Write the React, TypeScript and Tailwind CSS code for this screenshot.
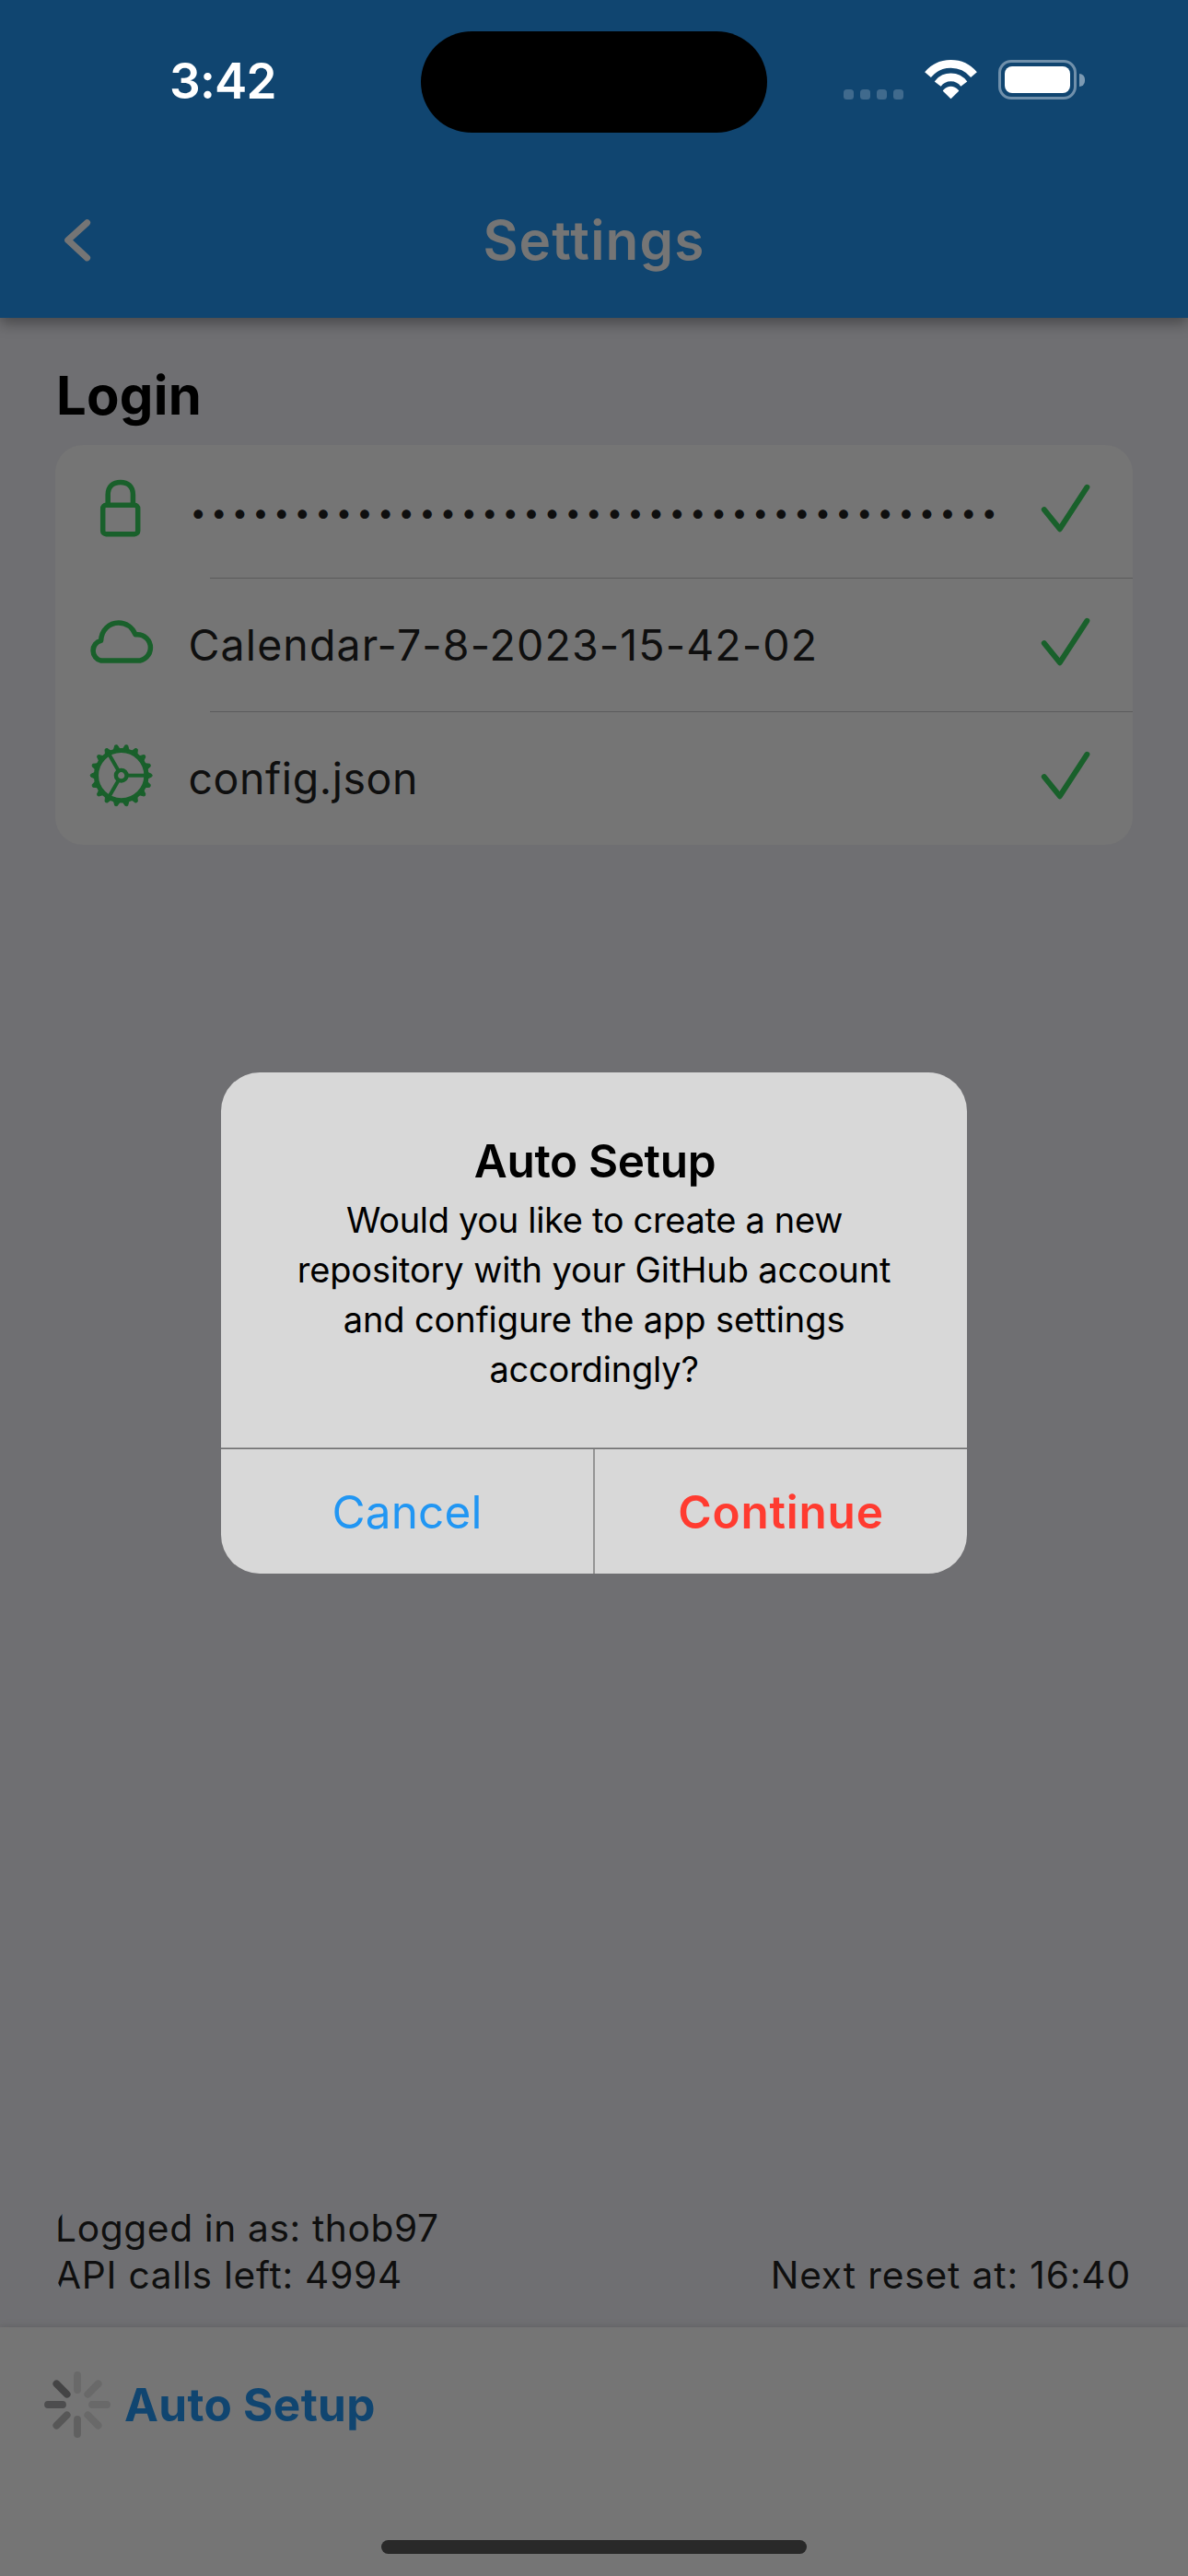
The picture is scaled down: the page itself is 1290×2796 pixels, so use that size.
import type { ReactNode } from "react";

const GREEN = "#19602b";

function StatusIcons() {
  return (
    <div className="flex items-center pb-1">
      <div className="mt-[31px] flex gap-[7px]">
        {[0, 1, 2, 3].map((i) => (
          <span key={i} className="size-[11px] rounded-[3.5px] bg-[#406a8d]" />
        ))}
      </div>
      <svg className="ml-[22px] h-[43px] w-[59px]" viewBox="0 0 59 43" fill="none">
        <path d="M4.5 16.1A32.6 32.6 0 0 1 54.5 16.1" stroke="#fff" strokeWidth="8.8" />
        <path d="M15.2 26.1A17.7 17.7 0 0 1 43.8 26.1" stroke="#fff" strokeWidth="8.6" />
        <path
          d="M21.6 33.5Q29.5 25.8 37.4 33.5L29.5 41.3Z"
          fill="#fff"
          stroke="#fff"
          strokeWidth="1.6"
          strokeLinejoin="round"
        />
      </svg>
      <div className="ml-[22px] flex h-[43px] w-[85px] rounded-[14px] border-[3px] border-[#7090ab] p-1">
        <div className="flex-1 rounded-[8px] bg-white" />
      </div>
      <div className="ml-[3px] h-[14px] w-[6px] rounded-r-full bg-[#7d9ab3]" />
    </div>
  );
}

function LockIcon() {
  return (
    <>
      <rect x="21.7" y="38.3" width="38" height="31.4" rx="3.5" />
      <path d="M27.2 38V27C27.2 18 33 13.4 40.8 13.4S54.4 18 54.4 27V38" />
    </>
  );
}

function CloudIcon() {
  return (
    <path
      strokeLinejoin="round"
      d="M19.8 62.1H59.2A14.2 14.2 0 0 0 59.2 33.7H57C53.5 25.5 46.5 21 38.7 21C28.5 21 20.3 28.8 19.6 40.3A11.2 11.2 0 0 0 19.8 62.1Z"
    />
  );
}

function GearIcon() {
  const teeth = Array.from({ length: 18 }, (_, i) => i * 20);
  return (
    <g transform="translate(41.7 41.7)">
      <circle r="27.2" strokeWidth="5.2" />
      <circle r="5.8" strokeWidth="4.4" />
      {[0, 120, 240].map((a) => (
        <path key={a} d="M7 0H26" strokeWidth="4" transform={`rotate(${a})`} />
      ))}
      {teeth.map((a) => (
        <path
          key={a}
          d="M28.5 -3.4L33 -1.3Q34 0 33 1.3L28.5 3.4Z"
          fill={GREEN}
          strokeWidth="1"
          transform={`rotate(${a})`}
        />
      ))}
    </g>
  );
}

function Row({ icon, children }: { icon: ReactNode; children: ReactNode }) {
  return (
    <div className="flex h-[144px] items-center pr-[40px] pl-[30px] text-[46.5px] text-[#0f0f0f]">
      <svg className="mb-[6px] size-[84px] shrink-0" viewBox="0 0 84 84" fill="none" stroke={GREEN} strokeWidth="5.5">
        {icon}
      </svg>
      <div className="ml-[30.5px] min-w-0 flex-1 leading-[60px] whitespace-nowrap">{children}</div>
      <svg
        className="mb-[6px] h-[84px] w-[65px] shrink-0"
        viewBox="0 0 65 84"
        fill="none"
        stroke={GREEN}
        strokeWidth="6"
        strokeLinecap="round"
        strokeLinejoin="round"
      >
        <path d="M8.8 43.2L25.8 64.2L55.3 18.8" />
      </svg>
    </div>
  );
}

const petals = ["#696969", "#696969", "#696969", "#696969", "#606060", "#575757", "#4d4d4e", "#444445"];

function Spinner() {
  return (
    <svg className="size-[72px]" viewBox="-36 -36 72 72">
      {petals.map((color, i) => (
        <path
          key={i}
          d="M0 -16V-32"
          stroke={color}
          strokeWidth="7.8"
          strokeLinecap="round"
          transform={`rotate(${i * 45})`}
        />
      ))}
    </svg>
  );
}

function Alert() {
  return (
    <div className="absolute top-[1164px] left-[240px] h-[543.5px] w-[810px] overflow-hidden rounded-[42px] bg-[#d8d8d8] text-center">
      <h2 className="pt-[66px] pl-[2px] text-[49.5px] leading-[60px] font-semibold tracking-[-0.37px] text-black">
        Auto Setup
      </h2>
      <p className="mt-[7px] text-[38px] leading-[54px] text-black">
        <span className="block pl-px tracking-[-0.32px]">Would you like to create a new</span>
        <span className="block tracking-[-0.13px]">repository with your GitHub account</span>
        <span className="block tracking-[-0.1px]">and configure the app settings</span>
        <span className="block tracking-[-0.2px]">accordingly?</span>
      </p>
      <div className="mt-[58px] h-px bg-[#979797]" />
      <div className="h-px bg-[#6f6f70]" />
      <div className="flex h-[135px] text-[49.5px] leading-[60px]">
        <button className="flex-1 border-r-2 border-[#959595] pt-px tracking-[0.14px] text-[#2196f3]">Cancel</button>
        <button className="flex-1 pt-px font-semibold tracking-[0.79px] text-[#ff3b30]">Continue</button>
      </div>
    </div>
  );
}

export default function App() {
  return (
    <div className="relative flex h-[2796px] w-[1290px] flex-col overflow-hidden bg-[#6f6f72] font-['Inter',sans-serif]">
      <header className="z-10 h-[345px] shrink-0 bg-[#104570] shadow-[0_6px_14px_rgba(0,0,0,0.35)]">
        <div className="flex h-[177px] items-center">
          <div className="w-[457px] pb-[2px] pl-[184px] text-[53px] leading-[64px] font-semibold tracking-[-0.8px] text-white">
            3:42
          </div>
          <div className="mt-[1px] h-[110px] w-[376px] rounded-full bg-black" />
          <div className="pl-[83px]">
            <StatusIcons />
          </div>
        </div>
        <div className="grid h-[168px] grid-cols-[1fr_auto_1fr] items-center text-[#757575]">
          <svg className="ml-[60px] h-[60px] w-[48px]" viewBox="0 0 48 60" fill="none">
            <path
              d="M34.5 10.8L13.8 29.7L34.5 48.8"
              stroke="currentColor"
              strokeWidth="7.2"
              strokeLinecap="round"
              strokeLinejoin="round"
            />
          </svg>
          <h1 className="text-[58.5px] leading-[72px] font-semibold tracking-[1.15px]">Settings</h1>
          <span />
        </div>
      </header>

      <main className="flex flex-1 flex-col px-[60px] pt-[48px] pb-[31px]">
        <h2 className="pl-px text-[58px] leading-[72px] font-bold tracking-[0.25px] text-black">Login</h2>
        <section className="mt-[18px] rounded-[30px] bg-[#757575]">
          <Row icon={<LockIcon />}>
            <div className="pt-[2px] pl-[2px] text-[31px] tracking-[5.17px]">{"•".repeat(39)}</div>
          </Row>
          <div className="ml-[168px] h-px bg-[#5b5b5c]" />
          <Row icon={<CloudIcon />}>
            <span className="tracking-[1.1px]">Calendar-7-8-2023-15-42-02</span>
          </Row>
          <div className="ml-[168px] h-px bg-[#5b5b5c]" />
          <Row icon={<GearIcon />}>
            <span className="tracking-[0.55px]">config.json</span>
          </Row>
        </section>

        <div className="mt-auto flex items-end justify-between overflow-hidden rounded-[30px] text-[40.7px] leading-[51px] text-[#0f0f0f]">
          <div>
            <div className="tracking-[0.62px]">Logged in as: thob97</div>
            <div className="tracking-[0.74px]">API calls left: 4994</div>
          </div>
          <div className="pr-[2px] tracking-[0.85px]">Next reset at: 16:40</div>
        </div>
      </main>

      <footer className="flex h-[270px] shrink-0 flex-col justify-between bg-[#757575] shadow-[0_-1px_8px_rgba(0,0,0,0.12)]">
        <div className="flex h-[168px] items-center pl-[48px]">
          <Spinner />
          <span className="ml-[15px] text-[49.5px] leading-[60px] font-bold tracking-[0.32px] text-[#104570]">
            Auto Setup
          </span>
        </div>
        <div className="mx-auto mb-[24px] h-[15px] w-[462px] rounded-full bg-[#292929]" />
      </footer>

      <Alert />
    </div>
  );
}
